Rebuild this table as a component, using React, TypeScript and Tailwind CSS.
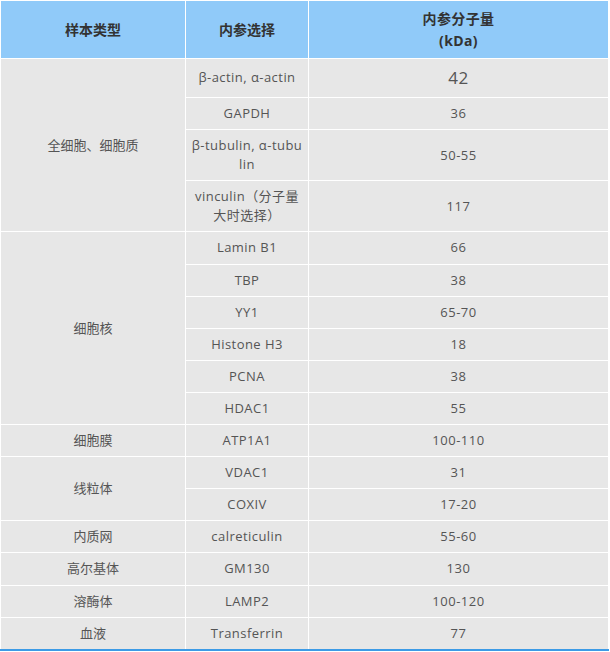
const font = {
  fontFamily: '"Open Sans", "Noto Sans CJK SC", sans-serif',
};

type Row = { type?: string; span?: number; name: string; kda: string; big?: boolean };

const rows: Row[] = [
  { type: "全细胞、细胞质", span: 4, name: "β-actin, α-actin", kda: "42", big: true },
  { name: "GAPDH", kda: "36" },
  { name: "β-tubulin, α-tubulin", kda: "50-55" },
  { name: "vinculin（分子量大时选择）", kda: "117" },
  { type: "细胞核", span: 6, name: "Lamin B1", kda: "66" },
  { name: "TBP", kda: "38" },
  { name: "YY1", kda: "65-70" },
  { name: "Histone H3", kda: "18" },
  { name: "PCNA", kda: "38" },
  { name: "HDAC1", kda: "55" },
  { type: "细胞膜", span: 1, name: "ATP1A1", kda: "100-110" },
  { type: "线粒体", span: 2, name: "VDAC1", kda: "31" },
  { name: "COXIV", kda: "17-20" },
  { type: "内质网", span: 1, name: "calreticulin", kda: "55-60" },
  { type: "高尔基体", span: 1, name: "GM130", kda: "130" },
  { type: "溶酶体", span: 1, name: "LAMP2", kda: "100-120" },
  { type: "血液", span: 1, name: "Transferrin", kda: "77" },
];

const cell = "border border-white bg-[#e7e7e7] py-1.5 text-center align-middle text-[13px] leading-[19.1px] text-[#555]";
const head = "border border-white bg-[#90caf9] px-[7px] py-1.5 text-center align-middle text-[14px] font-bold leading-[22px] text-[#333]";

export default function App() {
  return (
    <div className="w-[610px] bg-white" style={font}>
      <table className="w-[609px] table-fixed border-collapse border-b-2 border-b-[#3c9be6]">
        <colgroup>
          <col className="w-[185px]" />
          <col className="w-[123px]" />
          <col />
        </colgroup>
        <thead>
          <tr className="h-[58px]">
            <th className={head}>样本类型</th>
            <th className={head}>内参选择</th>
            <th className={head + " tracking-[0.4px]"}>
              内参分子量
              <br />
              (kDa)
            </th>
          </tr>
        </thead>
        <tbody>
          {rows.map((r, i) => (
            <tr key={i}>
              {r.type ? (
                <td className={cell + " px-[7px]"} rowSpan={r.span}>
                  {r.type}
                </td>
              ) : null}
              <td className={cell + " break-all px-[4px] tracking-[0.45px]"}>{r.name}</td>
              <td
                className={
                  r.big
                    ? cell + " px-[7px] text-[17px] leading-[26px] tracking-[0.5px] text-[#333]"
                    : cell + " px-[7px] tracking-[0.5px]"
                }
              >
                {r.kda}
              </td>
            </tr>
          ))}
        </tbody>
      </table>
    </div>
  );
}
